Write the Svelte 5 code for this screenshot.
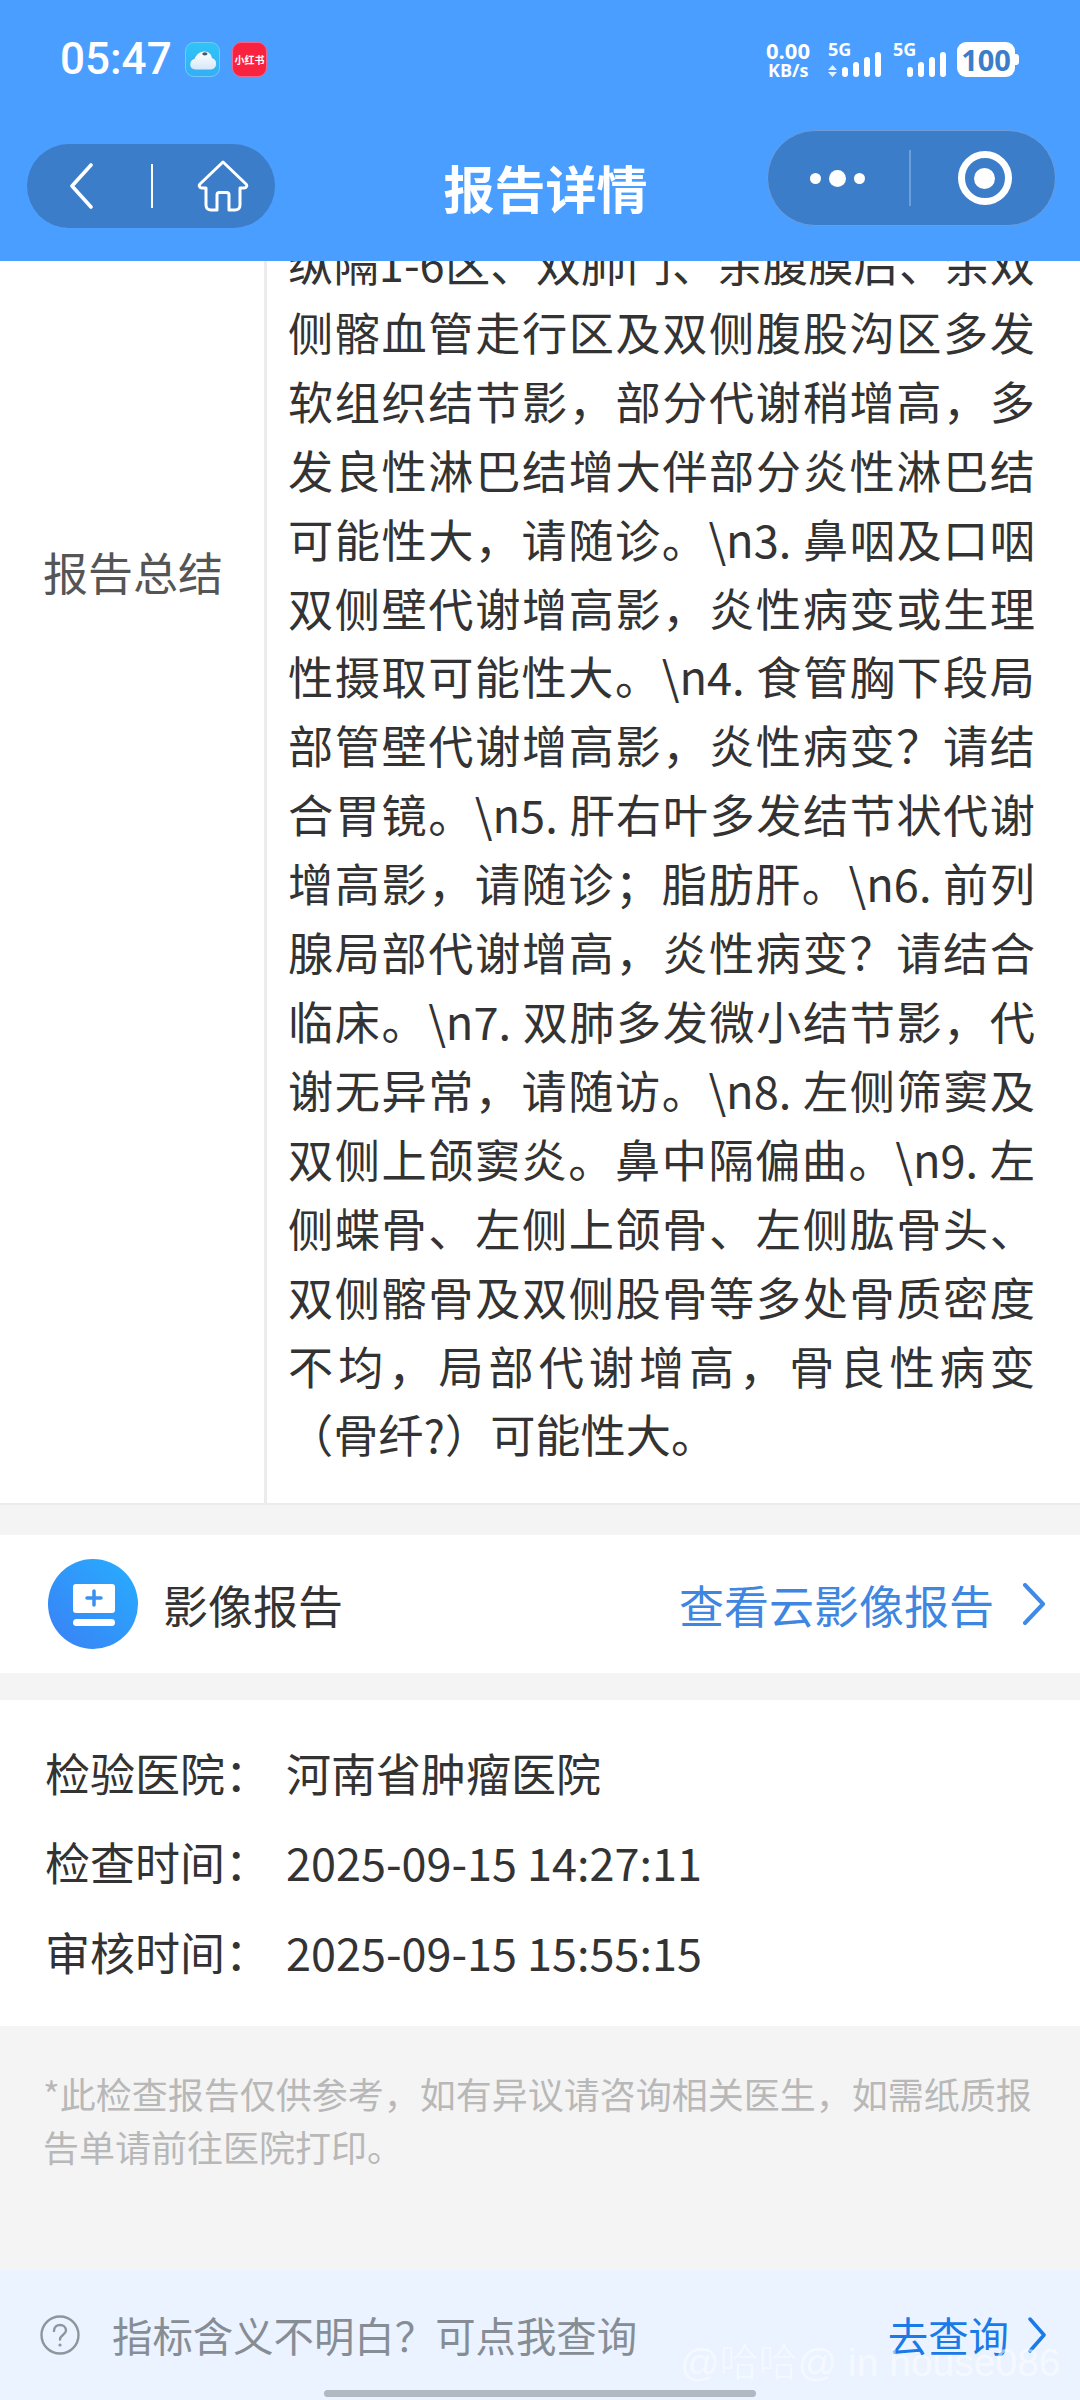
<script lang="ts">
  // the report text is wrapped line by line, same breaks as on the device
  const summaryLines = [
    "纵隔1-6区、双肺门、余腹膜后、余双",
    "侧髂血管走行区及双侧腹股沟区多发",
    "软组织结节影，部分代谢稍增高，多",
    "发良性淋巴结增大伴部分炎性淋巴结",
    "可能性大，请随诊。\\n3. 鼻咽及口咽",
    "双侧壁代谢增高影，炎性病变或生理",
    "性摄取可能性大。\\n4. 食管胸下段局",
    "部管壁代谢增高影，炎性病变？请结",
    "合胃镜。\\n5. 肝右叶多发结节状代谢",
    "增高影，请随诊；脂肪肝。\\n6. 前列",
    "腺局部代谢增高，炎性病变？请结合",
    "临床。\\n7. 双肺多发微小结节影，代",
    "谢无异常，请随访。\\n8. 左侧筛窦及",
    "双侧上颌窦炎。鼻中隔偏曲。\\n9. 左",
    "侧蝶骨、左侧上颌骨、左侧肱骨头、",
    "双侧髂骨及双侧股骨等多处骨质密度",
    "不均，局部代谢增高，骨良性病变",
  ];

  const infoRows = [
    { label: "检验医院：", value: "河南省肿瘤医院" },
    { label: "检查时间：", value: "2025-09-15 14:27:11" },
    { label: "审核时间：", value: "2025-09-15 15:55:15" },
  ];

  const bars = [10, 15, 20, 25];
</script>

<div class="page">
  <header class="header">
    <div class="status">
      <div class="status-left">
        <span class="time">05:47</span>
        <span class="app-icon app-blue">
          <svg viewBox="0 0 35 35" width="35" height="35">
            <defs>
              <linearGradient id="cloudGrad" x1="0" y1="0" x2="0" y2="1">
                <stop offset="0" stop-color="#ffffff" />
                <stop offset="1" stop-color="#d6e8f8" />
              </linearGradient>
            </defs>
            <path d="M10 28c-3.500 0-5.500-2.500-5.500-5.500 0-3 2-5 4.500-5.500 2-5 6-8 10-8 5 0 8 3 8.500 7 3 1 4.500 3 4.500 6 0 3.500-2.500 6-5.500 6z" fill="url(#cloudGrad)" />
            <ellipse cx="20" cy="11.500" rx="2.800" ry="1.800" fill="#3b5a70" />
          </svg>
        </span>
        <span class="app-icon app-red">小红书</span>
      </div>
      <div class="status-right">
        <div class="speed"><span>0.00</span><span class="speed-unit">KB/s</span></div>
        <div class="signal">
          <span class="net">5G</span>
          <span class="arrows">
            <svg viewBox="0 0 9 12" width="9" height="12">
              <path d="M4.500 0 9 5H0zM0 7h9l-4.500 5z" fill="#fff" opacity="0.85" />
            </svg>
          </span>
          <div class="bars">
            {#each bars as h}
              <i style="height: {h}px"></i>
            {/each}
          </div>
        </div>
        <div class="signal signal-2">
          <span class="net">5G</span>
          <div class="bars">
            {#each bars as h}
              <i style="height: {h}px"></i>
            {/each}
          </div>
        </div>
        <div class="battery">100</div>
      </div>
    </div>

    <div class="nav">
      <div class="capsule-left">
        <svg class="back" viewBox="0 0 24 46" width="24" height="46">
          <path d="M22 2 3 23l19 21" fill="none" stroke="#fff" stroke-width="3.600" stroke-linecap="round" stroke-linejoin="round" />
        </svg>
        <span class="capsule-line"></span>
        <svg class="home" viewBox="0 0 52 52" width="52" height="52">
          <path
            d="M26 2 3 24c-1.500 1.500-.5 4 1.500 4H9v17c0 3 2 5 5 5h6V35c0-1.500 1-2.500 2.500-2.500h7c1.500 0 2.500 1 2.500 2.500v15h6c3 0 5-2 5-5V28h4.500c2 0 3-2.500 1.500-4z"
            fill="none"
            stroke="#fff"
            stroke-width="3"
            stroke-linejoin="round"
          />
        </svg>
      </div>
      <h1 class="title">报告详情</h1>
      <div class="capsule-right">
        <div class="dots"><i></i><i class="big"></i><i></i></div>
        <span class="capsule-line dim"></span>
        <span class="target"><i></i></span>
      </div>
    </div>
  </header>

  <main class="main">
    <section class="summary">
      <div class="summary-label">报告总结</div>
      <div class="summary-text">
        {#each summaryLines as line}
          <div class="line">{line}</div>
        {/each}
        <div class="line last">（骨纤?）可能性大。</div>
      </div>
    </section>

    <section class="image-row">
      <span class="image-icon">
        <svg viewBox="0 0 90 90" width="90" height="90">
          <defs>
            <linearGradient id="imgGrad" x1="1" y1="0" x2="0" y2="1">
              <stop offset="0" stop-color="#27aeff" />
              <stop offset="1" stop-color="#3a80f5" />
            </linearGradient>
          </defs>
          <circle cx="45" cy="45" r="45" fill="url(#imgGrad)" />
          <rect x="25" y="25" width="42" height="29" rx="3" fill="#fff" />
          <path d="M46 32v14M39 39h14" stroke="#3a90f0" stroke-width="3.500" stroke-linecap="round" />
          <rect x="25" y="60" width="42" height="7" rx="3.500" fill="#fff" />
        </svg>
      </span>
      <span class="image-title">影像报告</span>
      <span class="image-link">查看云影像报告</span>
      <svg class="chev" viewBox="0 0 24 42" width="24" height="42">
        <path d="M3 2l18 19L3 40" fill="none" stroke="#3f8ae6" stroke-width="4" stroke-linecap="round" stroke-linejoin="round" />
      </svg>
    </section>

    <section class="info">
      {#each infoRows as row}
        <div class="info-row">
          <span class="info-label">{row.label}</span>
          <span class="info-value">{row.value}</span>
        </div>
      {/each}
    </section>

    <p class="note">*此检查报告仅供参考，如有异议请咨询相关医生，如需纸质报告单请前往医院打印。</p>
  </main>

  <footer class="footer">
    <svg class="help" viewBox="0 0 40 40" width="40" height="40">
      <circle cx="20" cy="20" r="18.500" fill="none" stroke="#8f959c" stroke-width="2.400" />
      <path d="M14 16c0-3.500 2.500-6 6-6s6 2.500 6 5.500c0 4-6 4.500-6 9" fill="none" stroke="#8f959c" stroke-width="2.400" stroke-linecap="round" />
      <circle cx="20" cy="30" r="1.600" fill="#8f959c" />
    </svg>
    <span class="footer-text">指标含义不明白？可点我查询</span>
    <span class="footer-link">去查询</span>
    <svg class="chev-small" viewBox="0 0 20 36" width="20" height="36">
      <path d="M3 2l14 16L3 34" fill="none" stroke="#1a7ae8" stroke-width="3.500" stroke-linecap="round" stroke-linejoin="round" />
    </svg>
    <span class="watermark">@哈哈@ in house086</span>
    <span class="home-bar"></span>
  </footer>
</div>

<style>
  :global(body) {
    margin: 0;
    background: #f4f4f4;
  }

  .page {
    width: 1080px;
    height: 2400px;
    display: flex;
    flex-direction: column;
    overflow: hidden;
    font-family: "Noto Sans CJK SC", "Noto Sans", sans-serif;
    color: #333;
  }

  /* header */
  .header {
    height: 261px;
    flex: none;
    box-sizing: border-box;
    padding: 42px 24px 0 27px;
    background: #4a9eff;
    color: #fff;
  }

  .status {
    height: 35px;
    display: flex;
    justify-content: space-between;
    padding-left: 33px;
    padding-right: 41px;
  }

  .status-left,
  .status-right {
    display: flex;
    align-items: center;
  }

  .time {
    font-family: Roboto, sans-serif;
    font-weight: 500;
    font-size: 44px;
    line-height: 35px;
    width: 125px;
  }

  .app-icon {
    width: 35px;
    height: 35px;
    box-sizing: border-box;
    border-radius: 9px;
    overflow: hidden;
    display: flex;
    align-items: center;
    justify-content: center;
  }

  .app-blue {
    background: linear-gradient(#2fc4f7, #35aef5);
    border: 1px solid #6fcbf8;
    margin-right: 12px;
  }

  .app-red {
    background: #f9223f;
    border: 1px solid #f5648a;
    font-size: 10px;
    font-weight: 700;
    white-space: nowrap;
  }

  .speed {
    width: 62px;
    display: flex;
    flex-direction: column;
    align-items: flex-start;
    font-family: "Open Sans", sans-serif;
    font-weight: 700;
    font-size: 22px;
    line-height: 20px;
  }

  .speed-unit {
    margin-left: 2px;
    font-size: 18px;
  }

  .signal {
    position: relative;
    width: 53px;
    height: 35px;
    display: flex;
    align-items: flex-end;
  }

  .signal-2 {
    margin-left: 12px;
    justify-content: flex-end;
  }

  .net {
    position: absolute;
    left: 0;
    top: 0;
    font-family: "Open Sans", sans-serif;
    font-weight: 700;
    font-size: 18px;
    line-height: 14px;
  }

  .arrows {
    display: flex;
    margin-right: 5px;
  }

  .bars {
    display: flex;
    align-items: flex-end;
    gap: 5px;
  }

  .bars i {
    width: 6px;
    border-radius: 3px;
    background: #fff;
  }

  .battery {
    width: 58px;
    height: 35px;
    margin-left: 11px;
    border-radius: 9px;
    background: #fff;
    color: #3b7dc9;
    font-family: "Open Sans", sans-serif;
    font-weight: 700;
    font-size: 29px;
    line-height: 35px;
    text-align: center;
    position: relative;
  }

  .battery::after {
    content: "";
    position: absolute;
    right: -4px;
    top: 12px;
    width: 4px;
    height: 11px;
    border-radius: 0 3px 3px 0;
    background: #fff;
  }

  .nav {
    margin-top: 53px;
    display: flex;
    justify-content: space-between;
    align-items: flex-start;
  }

  .capsule-left {
    margin-top: 14px;
    width: 248px;
    height: 84px;
    border-radius: 42px;
    background: #3b7dc9;
    display: flex;
    align-items: center;
    box-sizing: border-box;
    padding-left: 42px;
  }

  .capsule-line {
    width: 2px;
    height: 44px;
    margin-left: 58px;
    background: #fff;
  }

  .home {
    margin-left: 44px;
  }

  .title {
    margin: 24px 0 0 49px;
    font-size: 51px;
    line-height: 66px;
    font-weight: 700;
    color: #fff;
  }

  .capsule-right {
    width: 289px;
    height: 96px;
    box-sizing: border-box;
    border: 1.500px solid #6a9fdc;
    border-radius: 48px;
    background: #3b7dc9;
    display: flex;
    align-items: center;
  }

  .dots {
    display: flex;
    align-items: center;
    gap: 8px;
    margin-left: 42px;
  }

  .dots i {
    width: 11px;
    height: 11px;
    border-radius: 50%;
    background: #fff;
  }

  .dots i.big {
    width: 17px;
    height: 17px;
  }

  .capsule-right .capsule-line.dim {
    height: 56px;
    margin-left: 44px;
    background: #6a9fdc;
  }

  .target {
    width: 54px;
    height: 54px;
    margin-left: 47px;
    box-sizing: border-box;
    border: 7px solid #fff;
    border-radius: 50%;
    display: flex;
    align-items: center;
    justify-content: center;
  }

  .target i {
    width: 21px;
    height: 21px;
    border-radius: 50%;
    background: #fff;
  }

  /* body */
  .main {
    flex: 1;
    min-height: 0;
    overflow: hidden;
  }

  /* scrolled: the top of this table sits above the header */
  .summary {
    margin-top: -616px;
    display: flex;
    background: #fff;
    border-bottom: 2px solid #ececec;
  }

  .summary-label {
    width: 267px;
    flex: none;
    box-sizing: border-box;
    padding: 0 0 6px 43px;
    display: flex;
    align-items: center;
    border-right: 3px solid #ececec;
    font-size: 45px;
    color: #555;
  }

  .summary-text {
    flex: 1;
    min-width: 0;
    box-sizing: border-box;
    padding: 584px 45px 34px 21px;
    font-size: 45.200px;
    line-height: 68.900px;
  }

  .line {
    text-align: justify;
    text-align-last: justify;
    white-space: nowrap;
  }

  .line.last {
    text-align-last: left;
  }

  .image-row {
    margin-top: 30px;
    height: 138px;
    box-sizing: border-box;
    padding: 0 34px 0 48px;
    display: flex;
    align-items: center;
    background: #fff;
    font-size: 45px;
  }

  .image-icon {
    display: flex;
  }

  .image-title {
    margin-left: 25px;
    flex: 1;
  }

  .image-link {
    color: #3f86e0;
  }

  .chev {
    margin-left: 28px;
  }

  .info {
    margin-top: 27px;
    height: 326px;
    box-sizing: border-box;
    padding: 27px 0 0 45px;
    background: #fff;
    font-size: 45px;
  }

  .info-row {
    height: 89.500px;
    display: flex;
    align-items: center;
  }

  .info-label {
    width: 241px;
    flex: none;
  }

  .note {
    margin: 41px 44px 0 43px;
    font-size: 36px;
    line-height: 53px;
    color: #b8b8b8;
  }

  /* bottom bar */
  .footer {
    position: relative;
    height: 130px;
    flex: none;
    box-sizing: border-box;
    padding: 45px 33px 0 40px;
    display: flex;
    align-items: flex-start;
    background: #eaf3ff;
    font-size: 40.400px;
    line-height: 40px;
  }

  .footer-text {
    margin-left: 32px;
    flex: 1;
    color: #878d94;
  }

  .footer-link {
    color: #1a7ae8;
  }

  .chev-small {
    margin-left: 18px;
    margin-top: 2px;
  }

  .watermark {
    position: absolute;
    left: 680px;
    top: 68px;
    font-family: "Liberation Sans", "Noto Sans CJK SC", sans-serif;
    font-size: 39px;
    line-height: 50px;
    white-space: nowrap;
    font-weight: 300;
    color: rgba(255, 255, 255, 0.55);
  }

  .home-bar {
    position: absolute;
    left: 324px;
    bottom: 3px;
    width: 432px;
    height: 7px;
    border-radius: 4px;
    background: #b0b8c2;
  }
</style>
